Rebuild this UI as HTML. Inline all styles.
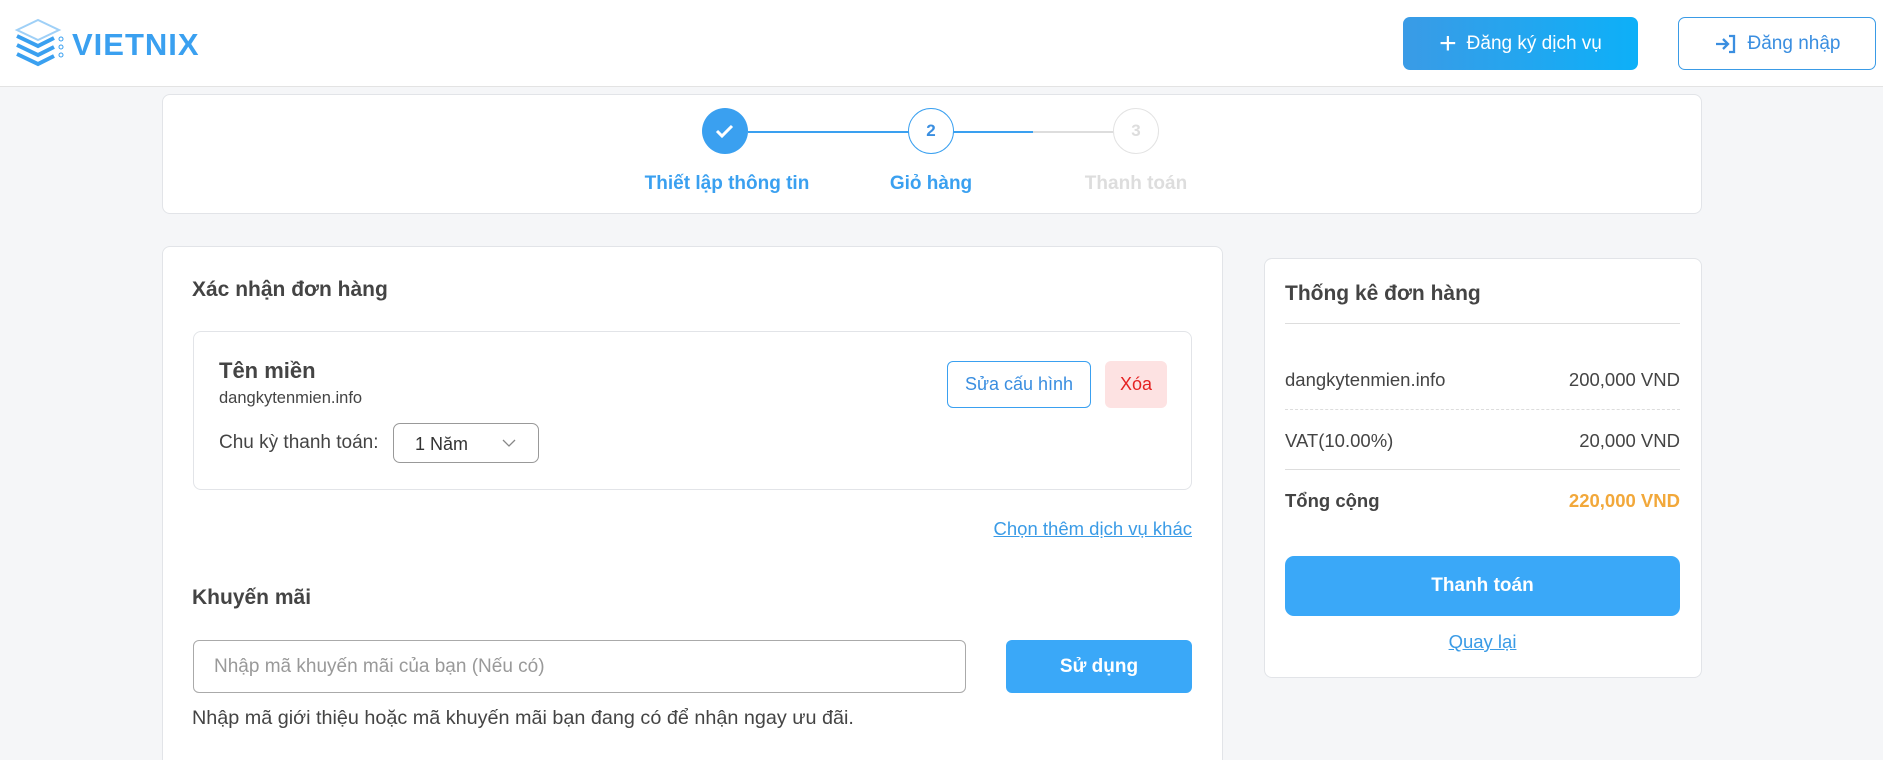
<!DOCTYPE html>
<html style="height:760px;overflow:hidden"><head><meta charset="utf-8"><style>
*{box-sizing:border-box;margin:0;padding:0}
body{width:1883px;height:760px;overflow:hidden;background:#f5f6f8;font-family:"Liberation Sans",Arial,sans-serif;color:#4a4a4a;position:relative}
.abs{position:absolute}
.header{left:0;top:0;width:1883px;height:87px;background:#fff;border-bottom:1px solid #e3e3e3}
.card{background:#fff;border:1px solid #e2e4e8;border-radius:8px}
.btn1{left:1403px;top:17px;width:235px;height:53px;border-radius:7px;background:linear-gradient(90deg,#3a9be6,#0db0f8);color:#fff;font-size:19px;display:flex;align-items:center;justify-content:center;gap:10px}
.btn2{left:1678px;top:17px;width:198px;height:53px;border-radius:7px;border:1px solid #3a9be6;color:#3a8ee0;font-size:19px;display:flex;align-items:center;justify-content:center;gap:10px;background:#fff}
.circ{width:46px;height:46px;border-radius:50%;display:flex;align-items:center;justify-content:center;font-weight:bold;font-size:17px}
.lbl{font-size:19px;font-weight:bold;transform:translateX(-50%);white-space:nowrap;top:173px}
.row{left:1285px;width:395px;display:flex;justify-content:space-between;font-size:18.5px;color:#444}
</style></head><body>
<div class="abs header"></div>
<svg class="abs" style="left:14px;top:16px" width="52" height="52" viewBox="0 0 52 52">
<path d="M3 14 L24 4 L45 14 L24 24 Z" fill="none" stroke="#9fd0f7" stroke-width="2"/>
<path d="M3 20 L24 30 L40 22" fill="none" stroke="#3aa0f0" stroke-width="4"/>
<path d="M3 29 L24 39 L40 31" fill="none" stroke="#3aa0f0" stroke-width="4"/>
<path d="M3 38 L24 48 L40 40" fill="none" stroke="#3aa0f0" stroke-width="4"/>
<circle cx="47" cy="23" r="2" fill="none" stroke="#3aa0f0"/><circle cx="47" cy="31" r="2" fill="none" stroke="#3aa0f0"/><circle cx="47" cy="39" r="2" fill="none" stroke="#3aa0f0"/>
</svg>
<div class="abs" style="left:72px;top:27px;font-size:31px;font-weight:bold;color:#3aa0f0;letter-spacing:1px">VIETNIX</div>
<div class="abs btn1"><span style="font-size:30px;font-weight:300;line-height:1">+</span>Đăng ký dịch vụ</div>
<div class="abs btn2"><svg width="24" height="22" viewBox="0 0 24 22"><path d="M2 11h12M9 6l5 5-5 5M15 3h5v16h-5" fill="none" stroke="#3a8ee0" stroke-width="2.3"/></svg>Đăng nhập</div>

<div class="abs card" style="left:162px;top:94px;width:1540px;height:120px"></div>
<div class="abs" style="left:748px;top:131px;width:285px;height:1.5px;background:#3aa0f0"></div>
<div class="abs" style="left:1033px;top:131px;width:90px;height:1.5px;background:#ddd"></div>
<div class="abs circ" style="left:702px;top:108px;background:#3aa0f0;color:#fff"><svg width="22" height="18" viewBox="0 0 22 18"><path d="M3 9l5 5 10-10" fill="none" stroke="#fff" stroke-width="3"/></svg></div>
<div class="abs circ" style="left:908px;top:108px;background:#fff;border:1.5px solid #3aa0f0;color:#3a8ee0">2</div>
<div class="abs circ" style="left:1113px;top:108px;background:#fff;border:1.5px solid #e3e3e3;color:#ddd">3</div>
<div class="abs lbl" style="left:727px;color:#3aa0f0">Thiết lập thông tin</div>
<div class="abs lbl" style="left:931px;color:#3aa0f0">Giỏ hàng</div>
<div class="abs lbl" style="left:1136px;color:#ddd">Thanh toán</div>

<div class="abs card" style="left:162px;top:246px;width:1061px;height:530px"></div>
<div class="abs" style="left:192px;top:278px;font-size:21px;font-weight:bold;color:#444">Xác nhận đơn hàng</div>
<div class="abs card" style="left:193px;top:331px;width:999px;height:159px"></div>
<div class="abs" style="left:219px;top:358px;font-size:22px;font-weight:bold;color:#444">Tên miền</div>
<div class="abs" style="left:219px;top:389px;font-size:16.5px;color:#444">dangkytenmien.info</div>
<div class="abs" style="left:219px;top:432px;font-size:19px;color:#444">Chu kỳ thanh toán:</div>
<div class="abs" style="left:393px;top:423px;width:146px;height:40px;border:1px solid #999;border-radius:7px;font-size:18px;padding:10px 0 0 21px;color:#333">1 Năm<svg class="abs" style="left:108px;top:15px" width="14" height="9" viewBox="0 0 14 9"><path d="M1 1l6 6 6-6" fill="none" stroke="#888" stroke-width="1.3"/></svg></div>
<div class="abs" style="left:947px;top:361px;width:144px;height:47px;border:1px solid #3aa0f0;border-radius:6px;color:#3a8ee0;font-size:18px;display:flex;align-items:center;justify-content:center">Sửa cấu hình</div>
<div class="abs" style="left:1105px;top:361px;width:62px;height:47px;background:#fde2e2;border-radius:6px;color:#e52222;font-size:18px;display:flex;align-items:center;justify-content:center">Xóa</div>
<div class="abs" style="left:960px;top:518px;width:232px;text-align:right;font-size:18.5px;color:#3a9be6;text-decoration:underline">Chọn thêm dịch vụ khác</div>
<div class="abs" style="left:192px;top:586px;font-size:21px;font-weight:bold;color:#444">Khuyến mãi</div>
<div class="abs" style="left:193px;top:640px;width:773px;height:53px;border:1px solid #aaa;border-radius:6px;font-size:19px;color:#999;padding:15px 0 0 20px">Nhập mã khuyến mãi của bạn (Nếu có)</div>
<div class="abs" style="left:1006px;top:640px;width:186px;height:53px;background:#3aa8f8;border-radius:6px;color:#fff;font-size:19px;font-weight:bold;display:flex;align-items:center;justify-content:center">Sử dụng</div>
<div class="abs" style="left:192px;top:707px;font-size:19.8px;color:#444">Nhập mã giới thiệu hoặc mã khuyến mãi bạn đang có để nhận ngay ưu đãi.</div>

<div class="abs card" style="left:1264px;top:258px;width:438px;height:420px"></div>
<div class="abs" style="left:1285px;top:282px;font-size:21px;font-weight:bold;color:#444">Thống kê đơn hàng</div>
<div class="abs" style="left:1285px;top:323px;width:395px;height:1px;background:#ddd"></div>
<div class="abs row" style="top:369px"><span>dangkytenmien.info</span><span>200,000 VND</span></div>
<div class="abs" style="left:1285px;top:409px;width:395px;border-top:1px dashed #ddd"></div>
<div class="abs row" style="top:430px"><span>VAT(10.00%)</span><span>20,000 VND</span></div>
<div class="abs" style="left:1285px;top:469px;width:395px;height:1px;background:#ddd"></div>
<div class="abs row" style="top:490px;font-weight:bold"><span>Tổng cộng</span><span style="color:#f2a83a">220,000 VND</span></div>
<div class="abs" style="left:1285px;top:556px;width:395px;height:60px;background:#3aa8f8;border-radius:9px;color:#fff;font-size:19px;font-weight:bold;display:flex;align-items:center;justify-content:center">Thanh toán</div>
<div class="abs" style="left:1285px;top:631px;width:395px;text-align:center;font-size:18.5px;color:#3a9be6;text-decoration:underline">Quay lại</div>
</body></html>
